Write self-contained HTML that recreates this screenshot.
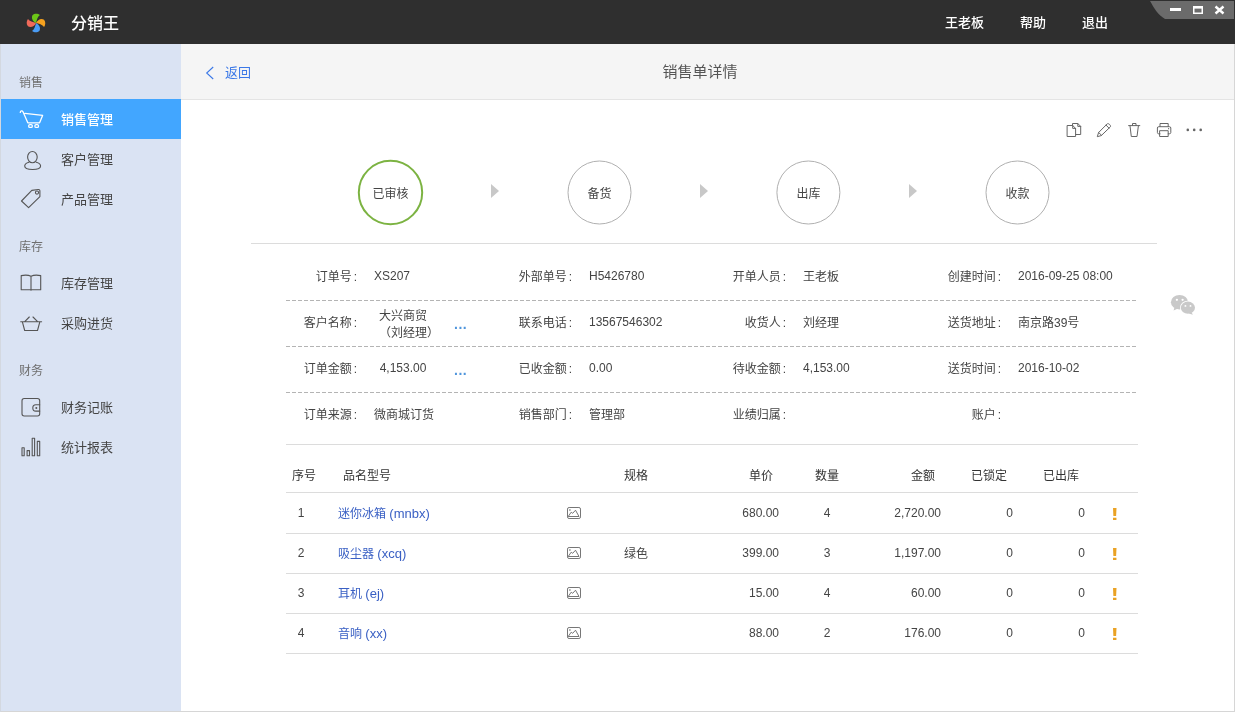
<!DOCTYPE html>
<html lang="zh-CN">
<head>
<meta charset="utf-8">
<title>销售单详情</title>
<style>
*{box-sizing:border-box;margin:0;padding:0}
html,body{width:1235px;height:712px;overflow:hidden;background:#fff}
body{position:relative;will-change:transform;font-family:"Liberation Sans","Noto Sans CJK SC",sans-serif;font-size:12px;color:#444;-webkit-font-smoothing:antialiased}
.abs{position:absolute;white-space:nowrap}
#top{position:absolute;left:0;top:0;width:1235px;height:44px;background:#2f2f2f}
#top .t{position:absolute;color:#fff;line-height:20px}
#side{position:absolute;left:0;top:44px;width:181px;height:668px;background:#dae3f3}
#side .sec{position:absolute;left:19px;font-size:12px;color:#6f6f6f;line-height:16px}
#side .it{position:absolute;left:0;width:181px;height:40px;line-height:42px;padding-left:61px;font-size:13px;color:#444}
#side .it.on{background:#42a6ff;color:#fff;font-weight:500}
#side svg{position:absolute;left:0;top:0}
#hdr{position:absolute;left:181px;top:44px;width:1054px;height:56px;background:#f5f5f5;border-bottom:1px solid #e4e4e4}
.step{position:absolute;width:65px;height:65px;text-align:center;line-height:69px;font-size:12px;color:#444;top:160px}
.arr{position:absolute;top:184px;width:0;height:0;border-left:8px solid #c8c8c8;border-top:7px solid transparent;border-bottom:7px solid transparent}
.hl{position:absolute;height:1px;background:#dcdcdc}
.dl{position:absolute;left:286px;width:850px;height:1px;background:repeating-linear-gradient(90deg,#b4b4b4 0,#b4b4b4 4px,transparent 4px,transparent 6px)}
.lab{position:absolute;text-align:right;width:90px;line-height:16px;color:#444}
.val{position:absolute;line-height:16px;color:#444;white-space:nowrap}
.th{position:absolute;line-height:16px;color:#333;white-space:nowrap}
.td{position:absolute;line-height:16px;color:#444;white-space:nowrap}
.lab i{font-style:normal;margin-left:2px}
.r{text-align:right}
.c{text-align:center}
a.lk{position:absolute;color:#3a60c4;text-decoration:none;line-height:16px;font-size:12px;white-space:nowrap}
a.lk span{font-size:13px}
.ex{position:absolute;color:#eaa224;font-weight:bold;font-size:16px;line-height:16px;transform:scaleX(1.500);transform-origin:50% 50%}
.dots{position:absolute;color:#4f95dc;font-size:14px;line-height:10px;letter-spacing:0.5px;font-weight:bold}
</style>
</head>
<body>
<!-- TOP BAR -->
<div id="top">
  <svg class="abs" style="left:22.500px;top:9.500px" width="26" height="26" viewBox="-13.900 -13.900 27.800 27.800">
    <path d="M0,0 C-3.500,-1.500 -5.500,-5.500 -3.600,-8.600 C-1.500,-10.600 2.200,-10.200 4.200,-8.600 C1.600,-7 0.800,-3 0,0Z" fill="#6cc618"/>
    <path d="M0,0 C-3.500,-1.500 -5.500,-5.500 -3.600,-8.600 C-1.500,-10.600 2.200,-10.200 4.200,-8.600 C1.600,-7 0.800,-3 0,0Z" fill="#f5a11f" transform="rotate(90)"/>
    <path d="M0,0 C-3.500,-1.500 -5.500,-5.500 -3.600,-8.600 C-1.500,-10.600 2.200,-10.200 4.200,-8.600 C1.600,-7 0.800,-3 0,0Z" fill="#4a9cf5" transform="rotate(180)"/>
    <path d="M0,0 C-3.500,-1.500 -5.500,-5.500 -3.600,-8.600 C-1.500,-10.600 2.200,-10.200 4.200,-8.600 C1.600,-7 0.800,-3 0,0Z" fill="#f06a5a" transform="rotate(270)"/>
  </svg>
  <div class="t" style="left:71px;top:14px;font-size:16px;font-weight:500">分销王</div>
  <div class="t" style="left:945px;top:13px;font-size:13px;font-weight:500">王老板</div>
  <div class="t" style="left:1020px;top:13px;font-size:13px;font-weight:500">帮助</div>
  <div class="t" style="left:1082px;top:13px;font-size:13px;font-weight:500">退出</div>
  <svg class="abs" style="left:1145px;top:0" width="90" height="22" viewBox="0 0 90 22">
    <path d="M5,1 L89,1 L89,19 L20,19 C13,15 9,8 5,1Z" fill="#6b6b6b"/>
    <rect x="25" y="8" width="11" height="3" fill="#fff"/>
    <rect x="48.750" y="6.750" width="8.500" height="6.500" fill="none" stroke="#fff" stroke-width="1.500"/>
    <rect x="48" y="6" width="10" height="2.600" fill="#fff"/>
    <path d="M70.500,6.500 L78.500,13.500 M78.500,6.500 L70.500,13.500" stroke="#fff" stroke-width="2.4"/>
  </svg>
</div>

<!-- SIDEBAR -->
<div id="side">
  <div class="sec" style="top:31px">销售</div>
  <div class="it on" style="top:55px">销售管理</div>
  <div class="it" style="top:95px">客户管理</div>
  <div class="it" style="top:135px">产品管理</div>
  <div class="sec" style="top:195px">库存</div>
  <div class="it" style="top:219px">库存管理</div>
  <div class="it" style="top:259px">采购进货</div>
  <div class="sec" style="top:319px">财务</div>
  <div class="it" style="top:343px">财务记账</div>
  <div class="it" style="top:383px">统计报表</div>
</div>


<!-- SIDEBAR ICONS -->
<svg class="abs" style="left:0;top:100px" width="60" height="370" viewBox="0 100 60 370" fill="none" stroke="#555" stroke-width="1.100" stroke-linejoin="round" stroke-linecap="round">
  <!-- cart -->
  <g stroke="#fff" stroke-width="1.300">
    <path d="M20.300,112.400 C20.300,110.800 22.300,110.300 23,111.800 L27.800,122.800 L39.600,122.800 L42.600,115.400 L25,113.300"/>
    <rect x="28.700" y="124.600" width="3.600" height="2.800" rx="1.200"/>
    <rect x="34.900" y="124.600" width="3.600" height="2.800" rx="1.200"/>
  </g>
  <!-- person -->
  <ellipse cx="32.400" cy="157.100" rx="4.800" ry="5.600"/>
  <path d="M29,162.200 C26,163 24.700,164.500 24.700,166.100 C24.700,168.100 28.200,169.500 32.600,169.500 C37,169.500 40.600,168.100 40.600,166.100 C40.600,164.500 39.300,163 36.200,162.200"/>
  <!-- tag -->
  <path d="M21.500,201 L31.800,190.400 L38.300,189.500 C39.300,189.400 40,190.100 39.900,191.100 L39.900,196.600 L28.600,207.700 Z"/>
  <circle cx="37" cy="192.600" r="1.600"/>
  <!-- book -->
  <path d="M31,276.300 C28.500,275 24.500,275 21.200,275.600 L21.200,289.700 L40.700,289.700 L40.700,275.600 C37.500,275 33.500,275 31,276.300 L31,290.300"/>
  <!-- basket -->
  <path d="M20.700,321.700 L41.600,321.700 M22.300,321.700 L24.700,330.500 L37.500,330.500 L39.900,321.700 M24.700,321.700 L29.300,317 M37.600,321.700 L33,317"/>
  <!-- wallet -->
  <rect x="22" y="398.500" width="17.700" height="17.500" rx="2.200"/>
  <path d="M39.700,404.800 L35.800,404.800 C31.800,404.800 31.800,411.100 35.800,411.100 L39.700,411.100"/>
  <circle cx="36.300" cy="408" r="1" fill="#555" stroke="none"/>
  <!-- bars -->
  <rect x="22" y="447.800" width="2.200" height="8"/>
  <rect x="27.100" y="450.600" width="2.400" height="5.200"/>
  <rect x="32.200" y="438.300" width="2.400" height="17.500"/>
  <rect x="37.300" y="441.400" width="2.400" height="14.400"/>
</svg>

<!-- HEADER BAND -->
<div id="hdr"></div>
<svg class="abs" style="left:203px;top:64px" width="12" height="18" viewBox="0 0 12 18"><path d="M10.200,3 L3.700,9 L10.200,15" fill="none" stroke="#3b78e7" stroke-width="1.100"/></svg>
<div class="abs" style="left:225px;top:64px;font-size:13px;line-height:18px;color:#3b78e7">返回</div>
<div class="abs" style="left:600px;width:200px;text-align:center;top:62px;font-size:15px;line-height:20px;color:#555">销售单详情</div>


<!-- TOOLBAR ICONS -->
<svg class="abs" style="left:1060px;top:118px" width="150" height="24" viewBox="1060 118 150 24" fill="none" stroke="#666" stroke-width="1" stroke-linejoin="round" stroke-linecap="round">
  <!-- copy -->
  <path d="M1072.500,125.300 L1072.500,123.500 L1077.800,123.500 L1080.700,126.400 L1080.700,134.500 L1075.700,134.500"/>
  <path d="M1077.800,123.500 L1077.800,126.400 L1080.700,126.400"/>
  <path d="M1067.500,125.500 L1072.700,125.500 L1075.600,128.400 L1075.600,136.500 L1067.500,136.500 Z"/>
  <path d="M1072.700,125.500 L1072.700,128.400 L1075.600,128.400"/>
  <!-- pencil -->
  <path d="M1097.400,136.300 L1098.600,132.500 L1107.300,123.800 C1108.300,122.800 1111.500,125.700 1110.300,126.900 L1101.600,135.300 Z"/>
  <path d="M1098.600,132.500 L1101.600,135.300 M1106,125.100 L1109,128.100"/>
  <!-- trash -->
  <path d="M1128.600,125.600 L1139.800,125.600 M1132.500,125.600 L1132.500,123.500 L1136,123.500 L1136,125.600 M1130,125.800 L1131.300,136.500 L1137,136.500 L1138.400,125.800"/>
  <!-- printer -->
  <path d="M1160,126.600 L1160,123.500 L1168.200,123.500 L1168.200,126.600"/>
  <path d="M1160,133.800 L1158.800,133.800 C1157.800,133.800 1157.400,133.300 1157.400,132.500 L1157.400,128 C1157.400,127.100 1157.900,126.700 1158.800,126.700 L1169.400,126.700 C1170.300,126.700 1170.800,127.100 1170.800,128 L1170.800,132.500 C1170.800,133.300 1170.300,133.800 1169.400,133.800 L1168.200,133.800"/>
  <rect x="1160" y="130.700" width="8.200" height="5.800"/>
  <circle cx="1168.600" cy="128.700" r="0.600" fill="#666" stroke="none"/>
  <!-- more -->
  <g fill="#666" stroke="none"><circle cx="1187.800" cy="129.900" r="1.300"/><circle cx="1194.200" cy="129.900" r="1.300"/><circle cx="1200.700" cy="129.900" r="1.300"/></g>
</svg>

<!-- STEPS -->
<svg class="abs" style="left:350px;top:155px" width="710" height="76" viewBox="350 155 710 76" fill="none">
  <circle cx="390.500" cy="192.500" r="31.700" stroke="#7cb342" stroke-width="2"/>
  <circle cx="599.500" cy="192.500" r="31.500" stroke="#b0b0b0" stroke-width="1"/>
  <circle cx="808.400" cy="192.500" r="31.500" stroke="#b0b0b0" stroke-width="1"/>
  <circle cx="1017.500" cy="192.500" r="31.500" stroke="#b0b0b0" stroke-width="1"/>
</svg>
<div class="step on" style="left:358px">已审核</div>
<div class="step" style="left:567px">备货</div>
<div class="step" style="left:776px">出库</div>
<div class="step" style="left:985px">收款</div>
<div class="arr" style="left:491px"></div>
<div class="arr" style="left:700px"></div>
<div class="arr" style="left:909px"></div>
<div class="hl" style="left:251px;top:243px;width:906px"></div>


<!-- WECHAT -->
<svg class="abs" style="left:1165px;top:290px" width="36" height="30" viewBox="1165 290 36 30">
  <ellipse cx="1179.500" cy="302.200" rx="8.600" ry="7.300" fill="#c9c9c9"/>
  <path d="M1174.500,307 L1173.600,310.600 L1178,308.600Z" fill="#c9c9c9"/>
  <ellipse cx="1187.900" cy="307.700" rx="7.900" ry="6.900" fill="#fff"/>
  <ellipse cx="1187.900" cy="307.700" rx="7.100" ry="6.100" fill="#c9c9c9"/>
  <path d="M1191.500,312 L1192.800,314.800 L1188.800,313.400Z" fill="#c9c9c9"/>
  <circle cx="1176.900" cy="299.800" r="1.150" fill="#fff"/><circle cx="1182.600" cy="299.800" r="1.150" fill="#fff"/>
  <circle cx="1185.400" cy="305.900" r="0.950" fill="#fff"/><circle cx="1190.500" cy="305.900" r="0.950" fill="#fff"/>
</svg>

<!-- INFO -->
<div class="dl" style="top:300px"></div>
<div class="dl" style="top:346px"></div>
<div class="dl" style="top:392px"></div>
<div class="hl" style="left:286px;top:444px;width:852px"></div>

<div class="lab" style="left:267px;top:269px">订单号<i>:</i></div><div class="val" style="left:374px;top:268px">XS207</div>
<div class="lab" style="left:482px;top:269px">外部单号<i>:</i></div><div class="val" style="left:589px;top:268px">H5426780</div>
<div class="lab" style="left:696px;top:269px">开单人员<i>:</i></div><div class="val" style="left:803px;top:269px">王老板</div>
<div class="lab" style="left:911px;top:269px">创建时间<i>:</i></div><div class="val" style="left:1018px;top:268px">2016-09-25 08:00</div>

<div class="lab" style="left:267px;top:315px">客户名称<i>:</i></div>
<div class="val c" style="left:363px;width:80px;top:308px">大兴商贸</div>
<div class="val c" style="left:369px;width:80px;top:325px">（刘经理）</div>
<div class="dots" style="left:454px;top:319px">...</div>
<div class="lab" style="left:482px;top:315px">联系电话<i>:</i></div><div class="val" style="left:589px;top:314px">13567546302</div>
<div class="lab" style="left:696px;top:315px">收货人<i>:</i></div><div class="val" style="left:803px;top:315px">刘经理</div>
<div class="lab" style="left:911px;top:315px">送货地址<i>:</i></div><div class="val" style="left:1018px;top:315px">南京路39号</div>

<div class="lab" style="left:267px;top:361px">订单金额<i>:</i></div>
<div class="val c" style="left:363px;width:80px;top:360px">4,153.00</div>
<div class="dots" style="left:454px;top:365px">...</div>
<div class="lab" style="left:482px;top:361px">已收金额<i>:</i></div><div class="val" style="left:589px;top:360px">0.00</div>
<div class="lab" style="left:696px;top:361px">待收金额<i>:</i></div><div class="val" style="left:803px;top:360px">4,153.00</div>
<div class="lab" style="left:911px;top:361px">送货时间<i>:</i></div><div class="val" style="left:1018px;top:360px">2016-10-02</div>

<div class="lab" style="left:267px;top:407px">订单来源<i>:</i></div><div class="val" style="left:374px;top:407px">微商城订货</div>
<div class="lab" style="left:482px;top:407px">销售部门<i>:</i></div><div class="val" style="left:589px;top:407px">管理部</div>
<div class="lab" style="left:696px;top:407px">业绩归属<i>:</i></div>
<div class="lab" style="left:911px;top:407px">账户<i>:</i></div>

<!-- TABLE -->
<div class="hl" style="left:286px;top:492px;width:852px"></div>
<div class="hl" style="left:286px;top:533px;width:852px"></div>
<div class="hl" style="left:286px;top:573px;width:852px"></div>
<div class="hl" style="left:286px;top:613px;width:852px"></div>
<div class="hl" style="left:286px;top:653px;width:852px"></div>

<div class="th" style="left:292px;top:468px">序号</div>
<div class="th" style="left:343px;top:468px">品名型号</div>
<div class="th" style="left:624px;top:468px">规格</div>
<div class="th" style="left:749px;top:468px">单价</div>
<div class="th" style="left:815px;top:468px">数量</div>
<div class="th" style="left:911px;top:468px">金额</div>
<div class="th" style="left:971px;top:468px">已锁定</div>
<div class="th" style="left:1043px;top:468px">已出库</div>

<div class="td c" style="left:291px;width:20px;top:505px">1</div>
<a class="lk" style="left:338px;top:506px">迷你冰箱 <span>(mnbx)</span></a>
<svg class="abs" style="left:566px;top:506px" width="16" height="14" viewBox="0 0 16 14" fill="none" stroke="#666" stroke-width="0.900"><rect x="1.500" y="1.500" width="13" height="11" rx="1.600"/><path d="M2.200,10.500 L5.200,6.200 L6.700,7.300 L9.500,4.200 L13,10.500 Z" stroke-linejoin="round"/><circle cx="3.900" cy="4" r="0.800" fill="#666" stroke="none"/></svg>
<div class="td r" style="left:699px;width:80px;top:505px">680.00</div>
<div class="td c" style="left:807px;width:40px;top:505px">4</div>
<div class="td r" style="left:861px;width:80px;top:505px">2,720.00</div>
<div class="td r" style="left:973px;width:40px;top:505px">0</div>
<div class="td r" style="left:1045px;width:40px;top:505px">0</div>
<div class="ex" style="left:1112px;top:507px">!</div>
<div class="td c" style="left:291px;width:20px;top:545px">2</div>
<a class="lk" style="left:338px;top:546px">吸尘器 <span>(xcq)</span></a>
<svg class="abs" style="left:566px;top:546px" width="16" height="14" viewBox="0 0 16 14" fill="none" stroke="#666" stroke-width="0.900"><rect x="1.500" y="1.500" width="13" height="11" rx="1.600"/><path d="M2.200,10.500 L5.200,6.200 L6.700,7.300 L9.500,4.200 L13,10.500 Z" stroke-linejoin="round"/><circle cx="3.900" cy="4" r="0.800" fill="#666" stroke="none"/></svg>
<div class="td" style="left:624px;top:546px">绿色</div>
<div class="td r" style="left:699px;width:80px;top:545px">399.00</div>
<div class="td c" style="left:807px;width:40px;top:545px">3</div>
<div class="td r" style="left:861px;width:80px;top:545px">1,197.00</div>
<div class="td r" style="left:973px;width:40px;top:545px">0</div>
<div class="td r" style="left:1045px;width:40px;top:545px">0</div>
<div class="ex" style="left:1112px;top:547px">!</div>
<div class="td c" style="left:291px;width:20px;top:585px">3</div>
<a class="lk" style="left:338px;top:586px">耳机 <span>(ej)</span></a>
<svg class="abs" style="left:566px;top:586px" width="16" height="14" viewBox="0 0 16 14" fill="none" stroke="#666" stroke-width="0.900"><rect x="1.500" y="1.500" width="13" height="11" rx="1.600"/><path d="M2.200,10.500 L5.200,6.200 L6.700,7.300 L9.500,4.200 L13,10.500 Z" stroke-linejoin="round"/><circle cx="3.900" cy="4" r="0.800" fill="#666" stroke="none"/></svg>
<div class="td r" style="left:699px;width:80px;top:585px">15.00</div>
<div class="td c" style="left:807px;width:40px;top:585px">4</div>
<div class="td r" style="left:861px;width:80px;top:585px">60.00</div>
<div class="td r" style="left:973px;width:40px;top:585px">0</div>
<div class="td r" style="left:1045px;width:40px;top:585px">0</div>
<div class="ex" style="left:1112px;top:587px">!</div>
<div class="td c" style="left:291px;width:20px;top:625px">4</div>
<a class="lk" style="left:338px;top:626px">音响 <span>(xx)</span></a>
<svg class="abs" style="left:566px;top:626px" width="16" height="14" viewBox="0 0 16 14" fill="none" stroke="#666" stroke-width="0.900"><rect x="1.500" y="1.500" width="13" height="11" rx="1.600"/><path d="M2.200,10.500 L5.200,6.200 L6.700,7.300 L9.500,4.200 L13,10.500 Z" stroke-linejoin="round"/><circle cx="3.900" cy="4" r="0.800" fill="#666" stroke="none"/></svg>
<div class="td r" style="left:699px;width:80px;top:625px">88.00</div>
<div class="td c" style="left:807px;width:40px;top:625px">2</div>
<div class="td r" style="left:861px;width:80px;top:625px">176.00</div>
<div class="td r" style="left:973px;width:40px;top:625px">0</div>
<div class="td r" style="left:1045px;width:40px;top:625px">0</div>
<div class="ex" style="left:1112px;top:627px">!</div>

<!-- window frame -->
<div class="abs" style="left:1234px;top:44px;width:1px;height:668px;background:#d6d6d6"></div>
<div class="abs" style="left:0;top:711px;width:1235px;height:1px;background:#d6d6d6"></div>
<div class="abs" style="left:0;top:44px;width:1px;height:668px;background:#d3d8e0"></div>
</body>
</html>
